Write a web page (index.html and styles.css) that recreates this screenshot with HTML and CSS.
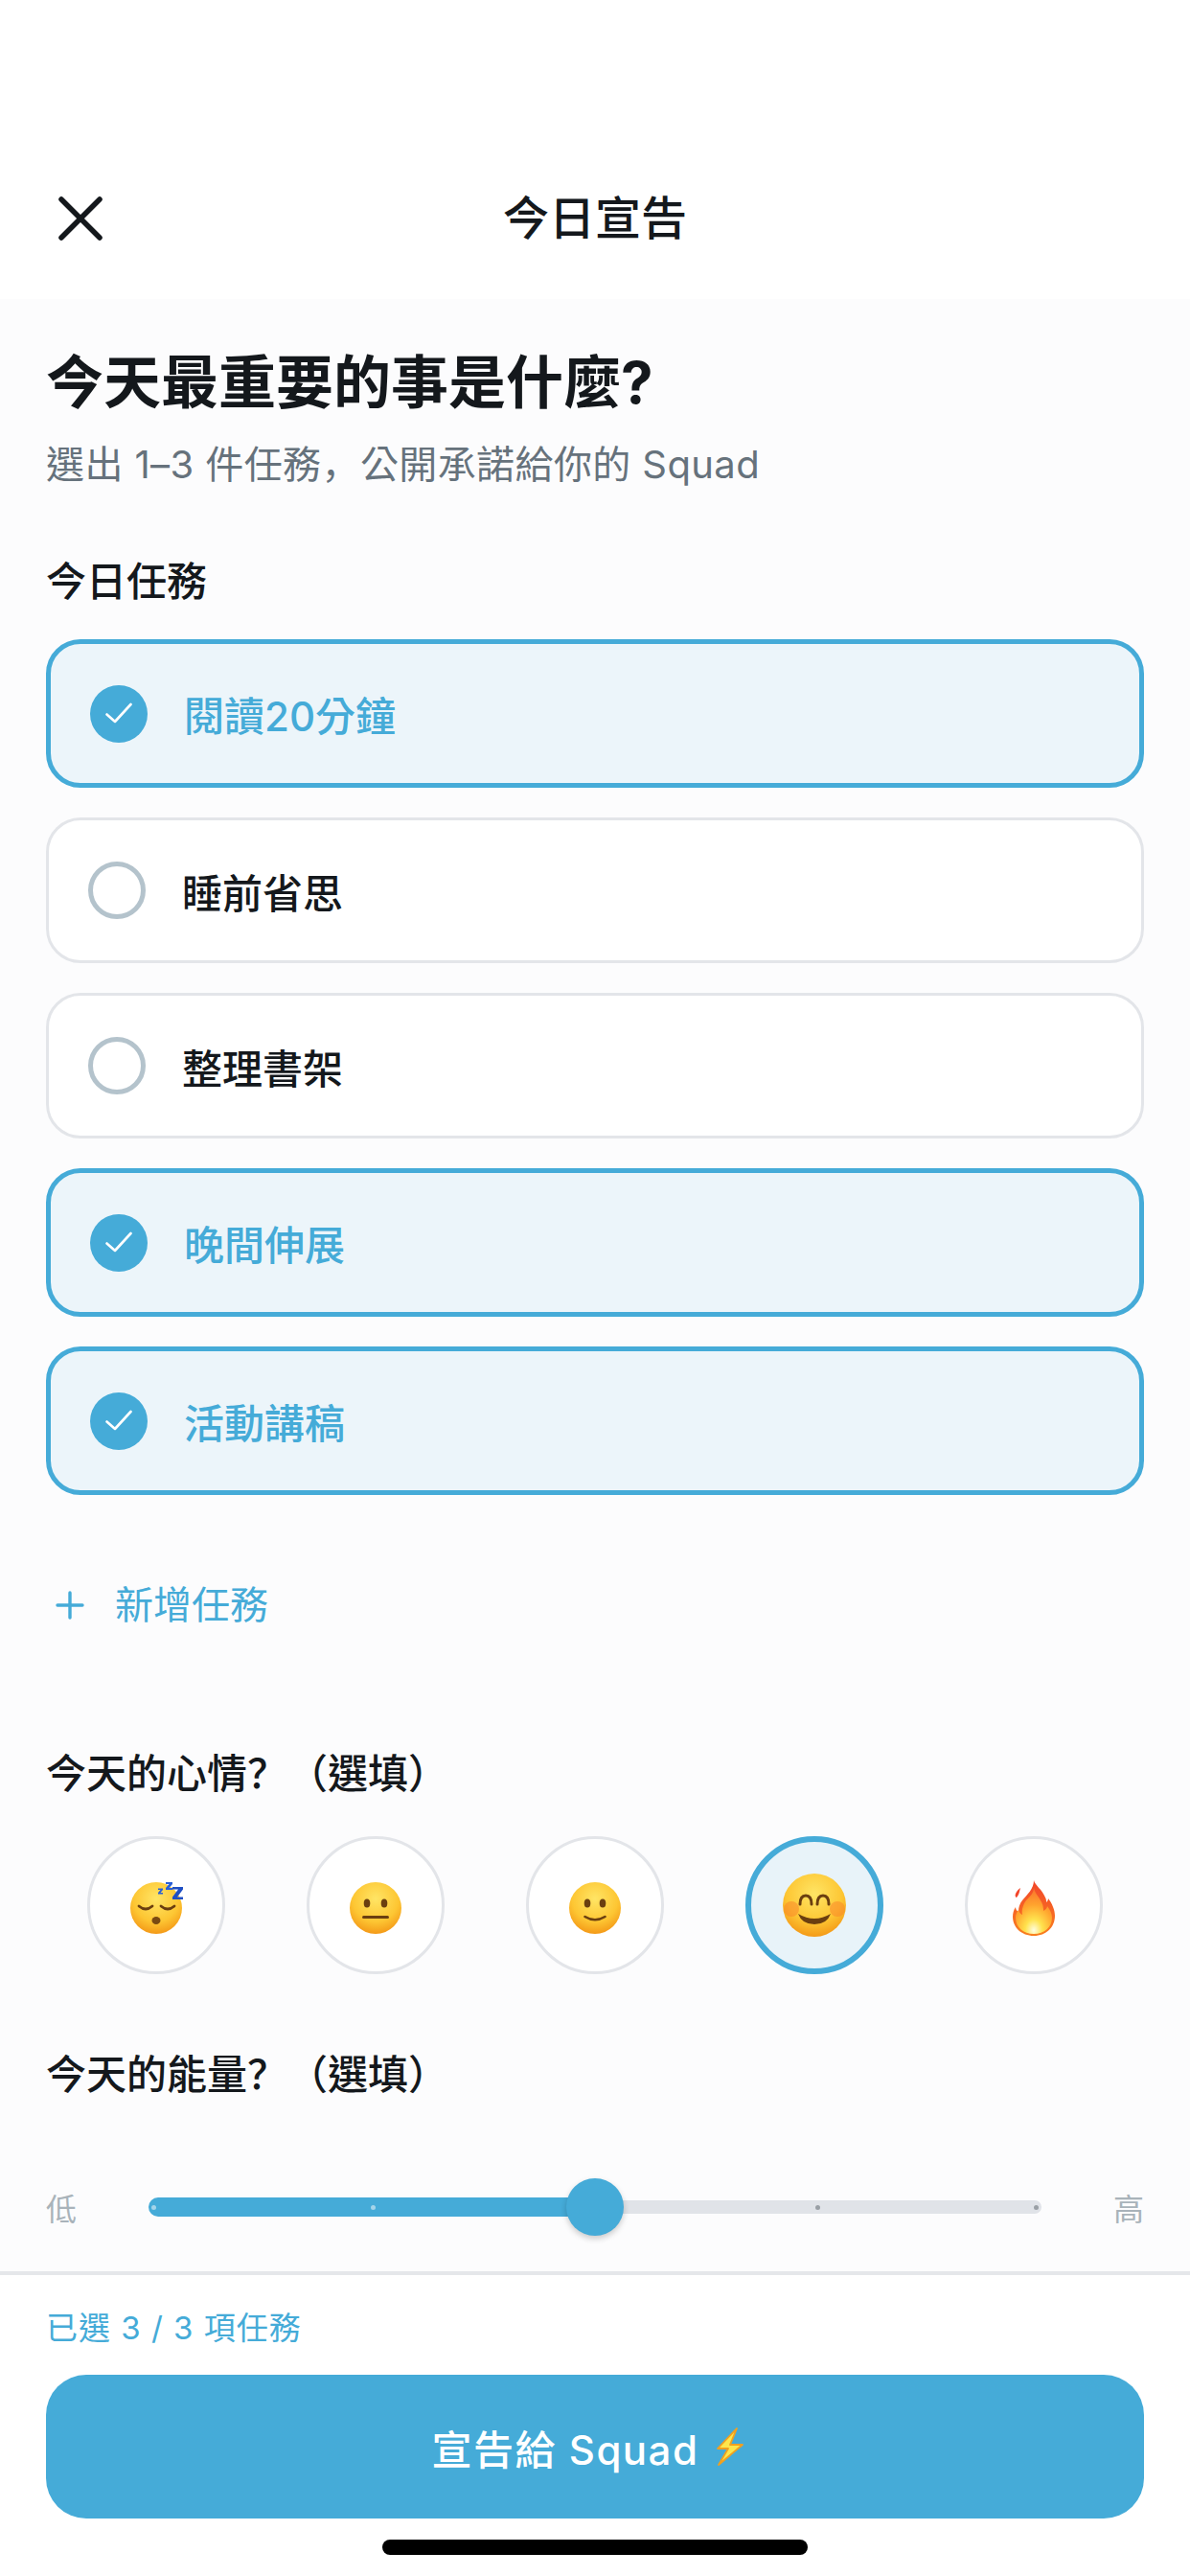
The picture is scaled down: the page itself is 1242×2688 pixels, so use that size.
FILE: index.html
```html
<!DOCTYPE html>
<html>
<head>
	<title>今日宣告</title>
	<link rel="stylesheet" href="styles.css">
</head>
<body>
<svg class="defs" width="0" height="0">
  <defs>
    <radialGradient id="face" cx="50%" cy="32%" r="68%">
      <stop offset="0" stop-color="#ffe565"/>
      <stop offset="0.65" stop-color="#fdc633"/>
      <stop offset="1" stop-color="#f49a18"/>
    </radialGradient>
    <linearGradient id="flame" x1="0" y1="1" x2="0" y2="0">
      <stop offset="0" stop-color="#f9801f"/>
      <stop offset="1" stop-color="#f2452a"/>
    </linearGradient>
    <radialGradient id="flameIn" cx="50%" cy="92%" r="85%">
      <stop offset="0" stop-color="#fffde0"/>
      <stop offset="0.28" stop-color="#ffe24d"/>
      <stop offset="0.65" stop-color="#ffa42e"/>
      <stop offset="1" stop-color="#fb7a2c"/>
    </radialGradient>
  </defs>
</svg>
<div class="page">
  <header class="topbar">
    <svg class="close" width="48" height="48" viewBox="0 0 48 48"><path d="M4 4L44 44M44 4L4 44" stroke="#14181c" stroke-width="5.500" stroke-linecap="round" fill="none"/></svg>
    <div class="topbar-title">今日宣告</div>
  </header>

  <main class="content">
    <h1>今天最重要的事是什麼?</h1>
    <p class="sub">選出 1–3 件任務<span class="pun">，</span>公開承諾給你的 Squad</p>

    <div class="label label-tasks">今日任務</div>
    <div class="tasks">
      <div class="task on">
        <span class="tick"><svg width="28" height="28" viewBox="0 0 28 28"><path d="M1.500 14.500L10 22L26.500 4" stroke="#fff" stroke-width="2.600" fill="none" stroke-linecap="round" stroke-linejoin="round"/></svg></span>
        <span class="task-name">閱讀20分鐘</span>
      </div>
      <div class="task">
        <span class="tick"></span>
        <span class="task-name">睡前省思</span>
      </div>
      <div class="task">
        <span class="tick"></span>
        <span class="task-name">整理書架</span>
      </div>
      <div class="task on">
        <span class="tick"><svg width="28" height="28" viewBox="0 0 28 28"><path d="M1.500 14.500L10 22L26.500 4" stroke="#fff" stroke-width="2.600" fill="none" stroke-linecap="round" stroke-linejoin="round"/></svg></span>
        <span class="task-name">晚間伸展</span>
      </div>
      <div class="task on">
        <span class="tick"><svg width="28" height="28" viewBox="0 0 28 28"><path d="M1.500 14.500L10 22L26.500 4" stroke="#fff" stroke-width="2.600" fill="none" stroke-linecap="round" stroke-linejoin="round"/></svg></span>
        <span class="task-name">活動講稿</span>
      </div>
    </div>

    <div class="add">
      <svg width="30" height="30" viewBox="0 0 30 30"><path d="M15 2V28M2 15H28" stroke="#45abd8" stroke-width="3.400" stroke-linecap="round"/></svg>
      <span>新增任務</span>
    </div>

    <div class="label label-mood">今天的心情<span class="pun">？（</span>選填<span class="pun">）</span></div>
    <div class="moods">
      <div class="mood">
        <svg width="54" height="54" viewBox="0 0 54 54">
          <circle cx="27" cy="27" r="27" fill="url(#face)"/>
          <path d="M9 25q7 6 14 0M32 25q7 6 14 0" stroke="#6b3f10" stroke-width="2.800" fill="none" stroke-linecap="round"/>
          <ellipse cx="27" cy="40" rx="4.500" ry="4" fill="#7a4a12"/>
          <path d="M44 5h11v2.500l-6 8h6V18H44v-2.500l6-8h-6z" fill="#1f4fc4"/>
          <path d="M37 0h7v2l-3.500 4H44v2h-7V6l3.500-4H37z" fill="#2a5fd6"/>
          <path d="M29 6.500h5v1.500l-2.500 3H34v1.500h-5V11l2.500-3H29z" fill="#2a5fd6"/>
        </svg>
      </div>
      <div class="mood">
        <svg width="54" height="54" viewBox="0 0 54 54">
          <circle cx="27" cy="27" r="27" fill="url(#face)"/>
          <ellipse cx="18" cy="22" rx="3.300" ry="4.600" fill="#6b3f10"/>
          <ellipse cx="36" cy="22" rx="3.300" ry="4.600" fill="#6b3f10"/>
          <rect x="13" y="35" width="28" height="3" rx="1.500" fill="#6b3f10"/>
        </svg>
      </div>
      <div class="mood">
        <svg width="54" height="54" viewBox="0 0 54 54">
          <circle cx="27" cy="27" r="27" fill="url(#face)"/>
          <ellipse cx="19" cy="22" rx="3.300" ry="4.600" fill="#6b3f10"/>
          <ellipse cx="35" cy="22" rx="3.300" ry="4.600" fill="#6b3f10"/>
          <path d="M16.500 36q10.500 6.500 21 0" stroke="#6b3f10" stroke-width="2.600" fill="none" stroke-linecap="round"/>
        </svg>
      </div>
      <div class="mood on">
        <svg width="66" height="66" viewBox="0 0 66 66">
          <circle cx="33" cy="33" r="33" fill="url(#face)"/>
          <circle cx="9" cy="37" r="8" fill="#f9812a" opacity="0.5"/>
          <circle cx="57" cy="37" r="8" fill="#f9812a" opacity="0.5"/>
          <path d="M18 32q0-9 6-9t6 9M36 32q0-9 6-9t6 9" stroke="#6b3f10" stroke-width="3" fill="none" stroke-linecap="round"/>
          <path d="M16 42q17 10 34 0q-4 11-17 11t-17-11z" fill="#6b3f10"/>
        </svg>
      </div>
      <div class="mood">
        <svg width="44" height="58" viewBox="0 0 44 58">
          <path d="M22 0c1 5 9 10 12 18c1 2 1 3 1 5c1-1 2-2 2-4c4 5 7 12 7 18c0 12-9 21-22 21S0 49 0 38c0-4 1-7 3-10c0 2 1 4 3 5c0-5 1-8 4-12c5-6 12-12 12-21z" fill="url(#flame)"/>
          <path d="M3 14c1-2 2-4 5-6c-1 3-1 7-4 10c-1 0-2-2-1-4z" fill="#f2452a"/>
          <path d="M22 8c1 6 7 11 9 17c1 3 1 5 1 7c2-1 4-3 4-5c3 4 5 8 5 12c0 10-8 17-19 17S3 49 3 39c0-3 1-6 3-8c1 3 2 4 4 5c-1-5 1-11 4-15c4-4 8-8 8-13z" fill="url(#flameIn)"/>
        </svg>
      </div>
    </div>

    <div class="label label-energy">今天的能量<span class="pun">？（</span>選填<span class="pun">）</span></div>
    <div class="energy">
      <span class="end">低</span>
      <div class="slider">
        <div class="slider-fill"><i class="dot"></i><i class="dot"></i></div>
        <div class="slider-rest"><i class="dot"></i><i class="dot"></i></div>
        <div class="thumb"></div>
      </div>
      <span class="end">高</span>
    </div>
  </main>

  <footer class="bottom">
    <div class="count">已選 3 / 3 項任務</div>
    <div class="cta">
      <span>宣告給 Squad</span>
      <svg width="30" height="40" viewBox="0 0 30 40"><path d="M22 1L2 22H13L3 39L28 18H15z" fill="#fde74c" stroke="#f0a020" stroke-width="1.800" stroke-linejoin="round"/></svg>
    </div>
    <div class="home"></div>
  </footer>
</div>
</body>
</html>
```

FILE: styles.css
```css
html, body {
  margin: 0;
  padding: 0;
  background: #fff;
}
* {
  box-sizing: border-box;
}
.defs {
  position: absolute;
}
.page {
  width: 1242px;
  height: 2688px;
  display: flex;
  flex-direction: column;
  font-family: "Inter", "Noto Sans CJK TC", sans-serif;
  color: #14181c;
}
/* full width punctuation sits in the corner of its box in the SC cut */
.pun {
  font-family: "Noto Sans CJK SC", sans-serif;
  line-height: 1;
}
.topbar {
  height: 312px;
  flex: none;
  display: flex;
  align-items: flex-end;
  justify-content: center;
  padding-bottom: 48px;
  background: #fff;
  position: relative;
}
.close {
  position: absolute;
  left: 60px;
  top: 204px;
}
.topbar-title {
  font-size: 48px;
  font-weight: 500;
  line-height: 72px;
}
.content {
  flex: 1;
  background: #fcfcfd;
  padding: 0 48px;
}
h1 {
  margin: 47px 0 0;
  font-size: 60px;
  font-weight: 700;
  line-height: 80px;
}
.sub {
  margin: 18px 0 0;
  font-size: 40px;
  line-height: 56px;
  letter-spacing: 0.4px;
  color: #66727c;
}
.label {
  font-size: 42px;
  font-weight: 500;
  line-height: 56px;
}
.label-tasks {
  margin-top: 66px;
}
.tasks {
  margin-top: 32px;
  display: flex;
  flex-direction: column;
  gap: 31px;
}
.task {
  height: 152px;
  display: flex;
  align-items: center;
  gap: 38px;
  padding: 0 41px;
  background: #fff;
  border: 3.5px solid #e3e5e9;
  border-radius: 36px;
  font-size: 42px;
  font-weight: 500;
}
.task.on {
  height: 155px;
  background: #ecf5fa;
  border: 5px solid #45abd8;
  color: #45abd8;
}
.tick {
  width: 60px;
  height: 60px;
  flex: none;
  border-radius: 50%;
  border: 5px solid #b4c3cc;
  display: flex;
  align-items: center;
  justify-content: center;
}
.on .tick {
  background: #45abd8;
  border: 0;
}
.add {
  margin-top: 88px;
  display: flex;
  align-items: center;
  gap: 32px;
  padding-left: 10px;
  font-size: 40px;
  line-height: 54px;
  color: #45abd8;
}
.label-mood {
  margin-top: 121px;
}
.moods {
  margin-top: 37px;
  padding: 0 43px;
  display: flex;
  justify-content: space-between;
}
.mood {
  width: 144px;
  height: 144px;
  border-radius: 50%;
  background: #fff;
  border: 3.5px solid #e3e5e9;
  display: flex;
  align-items: center;
  justify-content: center;
}
.mood svg {
  margin-top: 6px;
  overflow: visible;
}
.mood.on {
  background: #e8f3f9;
  border: 6px solid #45abd8;
}
.mood.on svg {
  margin-top: 0;
}
.label-energy {
  margin-top: 77px;
}
.energy {
  margin-top: 80px;
  height: 60px;
  display: flex;
  align-items: center;
  justify-content: space-between;
}
.end {
  font-size: 32px;
  color: #a9b3ba;
}
.slider {
  width: 932px;
  height: 60px;
  display: flex;
  align-items: center;
  position: relative;
}
.slider-fill {
  width: 466px;
  height: 20px;
  padding: 0 3px;
  background: #45abd8;
  border-radius: 10px 0 0 10px;
  display: flex;
  align-items: center;
  justify-content: space-between;
}
.slider-rest {
  flex: 1;
  height: 14px;
  padding: 0 3px 0 230px;
  background: #e0e3e8;
  border-radius: 0 7px 7px 0;
  display: flex;
  align-items: center;
  justify-content: space-between;
}
.slider-fill .dot {
  background: #a4d4ea;
}
.slider-fill .dot:last-child {
  margin-right: 226px;
}
.dot {
  width: 5px;
  height: 5px;
  border-radius: 50%;
  background: #9aa0a6;
}
.thumb {
  position: absolute;
  left: 436px;
  top: 0;
  width: 60px;
  height: 60px;
  border-radius: 50%;
  background: #45abd8;
  box-shadow: 0 3px 6px rgba(0, 0, 0, 0.2);
}
.bottom {
  flex: none;
  height: 318px;
  background: #fff;
  border-top: 4px solid #e5e7ea;
  padding: 0 48px;
}
.count {
  margin-top: 30px;
  font-size: 33px;
  line-height: 50px;
  letter-spacing: 1px;
  color: #45abd8;
}
.cta {
  margin-top: 24px;
  height: 150px;
  border-radius: 42px;
  background: #45abd8;
  color: #fff;
  font-size: 42px;
  font-weight: 500;
  letter-spacing: 1.5px;
  display: flex;
  align-items: center;
  justify-content: center;
  gap: 18px;
}
.cta svg {
  margin-right: 14px;
}
.home {
  width: 444px;
  height: 16px;
  margin: 22px auto 0;
  border-radius: 8px;
  background: #000;
}
```
